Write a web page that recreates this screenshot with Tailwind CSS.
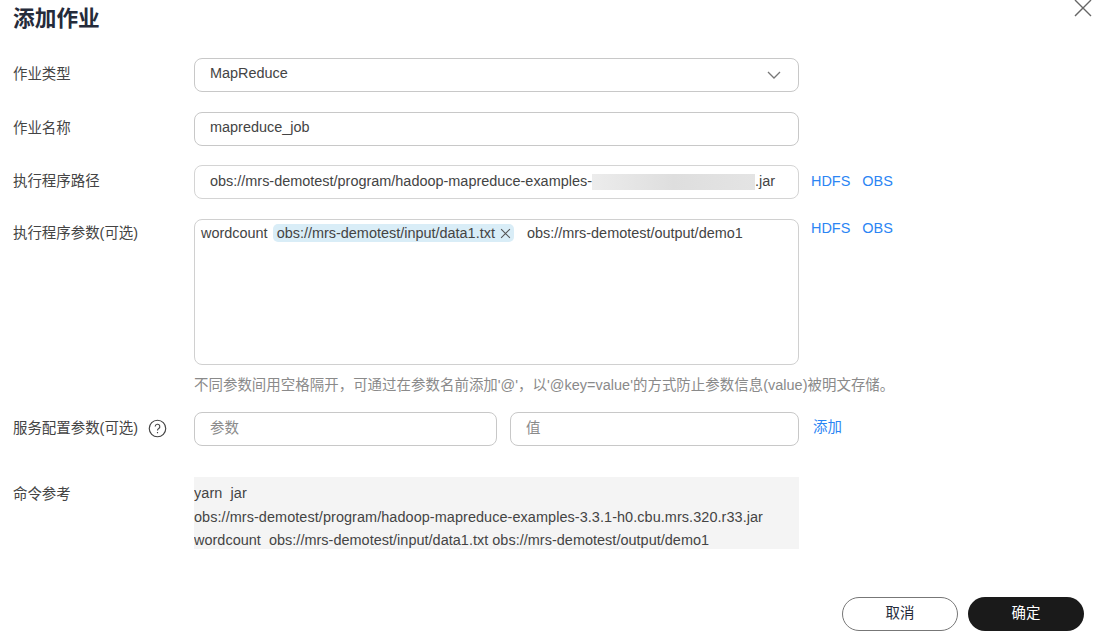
<!DOCTYPE html>
<html lang="zh">
<head>
  <meta charset="UTF-8" />
  <title>添加作业</title>
  <script src="https://cdn.jsdelivr.net/npm/@tailwindcss/browser@4"></script>
</head>
<body class="bg-white w-[1107px] h-[636px] overflow-hidden text-[#444] text-[14.45px] font-['Liberation_Sans','Noto_Sans_CJK_SC',sans-serif]">
  <!-- header -->
  <div class="flex justify-between items-start h-[58px] pl-[13px] pr-[14px]">
    <h1 class="text-[21.7px] leading-[38px] font-bold text-[#252b3a]">添加作业</h1>
    <svg class="w-[20px] h-[20px] -mt-[2px]" viewBox="0 0 20 20" fill="none" stroke="#666" stroke-width="1.4">
      <path d="M2 2 L18 18 M18 2 L2 18" />
    </svg>
  </div>

  <div class="flex flex-col">
    <div class="flex h-[34px] items-center">
      <label class="w-[194px] pl-[13px] shrink-0">作业类型</label>
      <div class="w-[605px] h-[34px] border border-[#c8c8c8] rounded-[8px] pl-[15px] pr-[17px] pb-[2px] flex items-center justify-between">
        <span>MapReduce</span>
        <svg class="w-[14px] h-[8px] mt-[2px]" viewBox="0 0 14 8" fill="none" stroke="#777" stroke-width="1.3"><path d="M1 1 L7 7 L13 1" /></svg>
      </div>
    </div>

    <div class="flex h-[34px] items-center mt-[20px]">
      <label class="w-[194px] pl-[13px] shrink-0">作业名称</label>
      <div class="w-[605px] h-[34px] border border-[#c8c8c8] rounded-[8px] px-[15px] pb-[2px] flex items-center">mapreduce_job</div>
    </div>

    <div class="flex h-[34px] items-center mt-[19px]">
      <label class="w-[194px] pl-[13px] shrink-0">执行程序路径</label>
      <div class="w-[605px] h-[34px] border border-[#d4d4d4] rounded-[8px] pl-[15px] pb-[1px] flex items-center">
        <span>obs://mrs-demotest/program/hadoop-mapreduce-examples-</span>
        <span class="w-[163px] h-[16px] bg-gradient-to-r from-[#ececec] via-[#dedede] to-[#e4e4e4]"></span>
        <span>.jar</span>
      </div>
      <div class="flex gap-[12px] ml-[12px] text-[#2b85f4]"><a>HDFS</a><a>OBS</a></div>
    </div>

    <div class="flex mt-[20px]">
      <label class="w-[194px] pl-[13px] shrink-0 pt-[4px]">执行程序参数(可选)</label>
      <div class="w-[605px] h-[146px] border border-[#d0d0d0] rounded-[8px] pl-[6px] pt-[4px] flex items-start">
        <span class="leading-[18px]">wordcount</span>
        <span class="ml-[5px] h-[18px] leading-[18px] pl-[4px] pr-[3px] bg-[#d9edf7] rounded-[5px] flex items-center gap-[5px]">
          obs://mrs-demotest/input/data1.txt
          <svg class="w-[11px] h-[11px]" viewBox="0 0 10 10" fill="none" stroke="#555" stroke-width="1"><path d="M1 1 L9 9 M9 1 L1 9" /></svg>
        </span>
        <span class="ml-[13px] leading-[18px]">obs://mrs-demotest/output/demo1</span>
      </div>
      <div class="flex gap-[12px] ml-[12px] text-[#2b85f4] leading-[18px]"><a>HDFS</a><a>OBS</a></div>
    </div>

    <p class="ml-[194px] mt-[11px] leading-[18px] tracking-[0.03px] text-[#8a8a8a] whitespace-nowrap">不同参数间用空格隔开，可通过在参数名前添加'@'，以'@key=value'的方式防止参数信息(value)被明文存储。</p>

    <div class="flex h-[34px] items-center mt-[18px]">
      <label class="w-[194px] pl-[13px] shrink-0 flex items-center gap-[10px] whitespace-nowrap">
        服务配置参数(可选)
        <svg class="w-[19px] h-[19px]" viewBox="0 0 18 18" fill="none" stroke="#444" stroke-width="1.1">
          <circle cx="9" cy="9" r="7.8" />
          <path d="M6.8 7.2 A2.2 2.2 0 1 1 9.9 9.2 Q9 9.7 9 10.8" />
          <path d="M9 12.3 V13.5" />
        </svg>
      </label>
      <div class="w-[303px] h-[34px] border border-[#c8c8c8] rounded-[8px] px-[15px] pb-[1px] flex items-center text-[#8a8a8a]">参数</div>
      <div class="w-[289px] h-[34px] ml-[13px] border border-[#c8c8c8] rounded-[8px] px-[15px] pb-[1px] flex items-center text-[#8a8a8a]">值</div>
      <a class="ml-[14px] pb-[2px] text-[#2b85f4]">添加</a>
    </div>

    <div class="flex mt-[31px]">
      <label class="w-[194px] pl-[13px] shrink-0 pt-[7px]">命令参考</label>
      <div class="w-[605px] h-[72px] bg-[#f4f4f4] pt-[5px] leading-[23.5px] tracking-[0.07px] whitespace-pre overflow-hidden">yarn  jar
obs://mrs-demotest/program/hadoop-mapreduce-examples-3.3.1-h0.cbu.mrs.320.r33.jar
<span class="tracking-[0.03px]">wordcount  obs://mrs-demotest/input/data1.txt obs://mrs-demotest/output/demo1</span></div>
    </div>

    <div class="flex justify-end gap-[10px] mt-[48px] pr-[23px]">
      <button class="w-[116px] h-[34px] rounded-full border border-[#777] bg-white pb-[1px] text-[#252b3a]">取消</button>
      <button class="w-[116px] h-[34px] rounded-full bg-[#1a1a1a] pb-[1px] text-white">确定</button>
    </div>
  </div>
</body>
</html>
